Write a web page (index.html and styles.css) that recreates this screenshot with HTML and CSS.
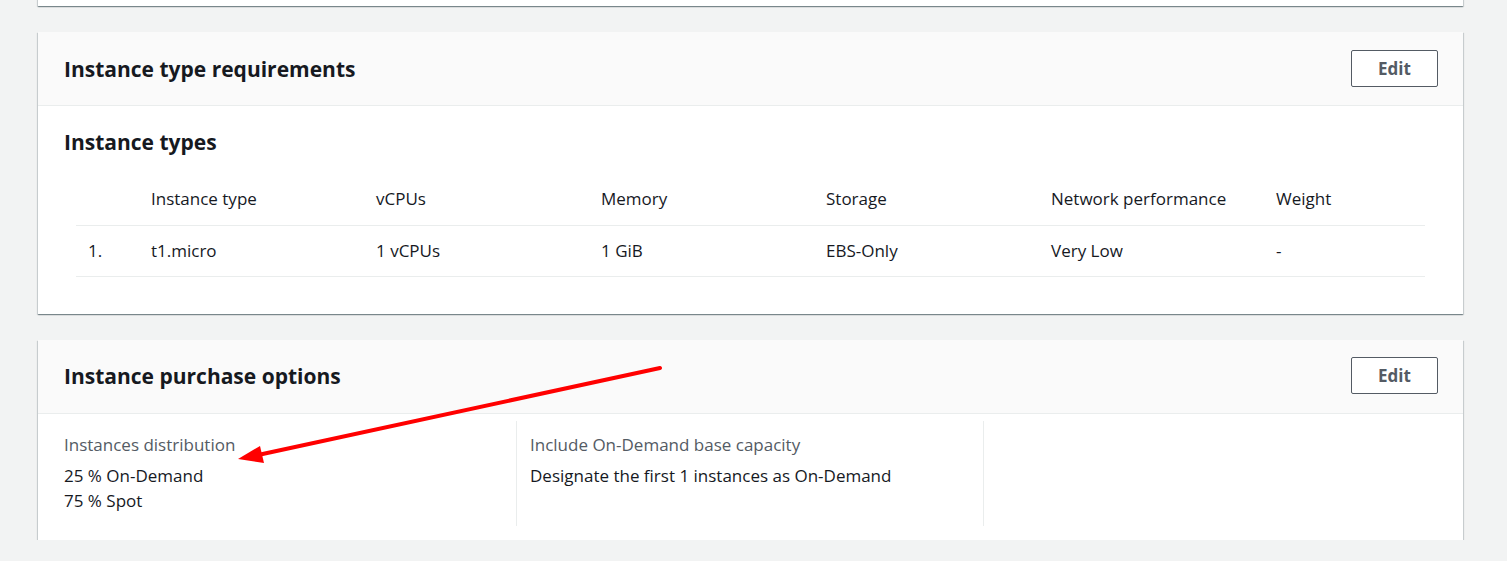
FILE: index.html
```html
<!DOCTYPE html>
<html>
<head>
<meta charset="utf-8">
<link rel="stylesheet" href="styles.css">
</head>
<body>
<div class="page">
  <div class="card card-top"></div>

  <section class="card">
    <header class="card-head">
      <h2>Instance type requirements</h2>
      <button class="btn">Edit</button>
    </header>
    <div class="card-body">
      <h3>Instance types</h3>
      <table class="types">
        <thead>
          <tr><th class="num"></th><th>Instance type</th><th>vCPUs</th><th>Memory</th><th>Storage</th><th class="net">Network performance</th><th class="net">Weight</th></tr>
        </thead>
        <tbody>
          <tr><td class="num">1.</td><td>t1.micro</td><td>1 vCPUs</td><td>1 GiB</td><td>EBS-Only</td><td class="net">Very Low</td><td class="net">-</td></tr>
        </tbody>
      </table>
    </div>
  </section>

  <section class="card">
    <header class="card-head">
      <h2>Instance purchase options</h2>
      <button class="btn">Edit</button>
    </header>
    <div class="cols">
      <div class="col">
        <div class="label">Instances distribution</div>
        <div class="value">25 % On-Demand</div>
        <div class="value">75 % Spot</div>
      </div>
      <div class="col">
        <div class="label">Include On-Demand base capacity</div>
        <div class="value">Designate the first 1 instances as On-Demand</div>
      </div>
      <div class="col"></div>
    </div>
    <svg class="arrow" width="440" height="110" viewBox="0 0 440 110">
      <line x1="424" y1="8" x2="22" y2="95" stroke="#f00" stroke-width="4" stroke-linecap="round"/>
      <polygon points="2,99 24,86 28,103" fill="#f00"/>
    </svg>
  </section>
</div>
</body>
</html>
```

FILE: styles.css
```css
* { box-sizing: border-box; }
html, body { margin: 0; padding: 0; }
body {
  background: #f2f3f3;
  font-family: "Open Sans", "Noto Sans", sans-serif;
  color: #16191f;
  font-size: 17px;
}
.page {
  width: 1425px;
  margin-left: 38px;
  display: flex;
  flex-direction: column;
  gap: 26px;
}
.card {
  background: #fff;
  position: relative;
  box-shadow: 0 1px 1px 0 rgba(0,28,36,.35), 1px 1px 1px 0 rgba(0,28,36,.12), -1px 1px 1px 0 rgba(0,28,36,.12);
}
.card-top {
  height: 7px;
  margin-top: -1px;
}
.card-head {
  background: #fafafa;
  border-bottom: 1px solid #eaeded;
  height: 74px;
  display: flex;
  align-items: center;
  justify-content: space-between;
  padding: 0 25px 0 26px;
}
h2 {
  margin: 0;
  font-size: 21px;
  font-weight: 700;
}
.btn {
  width: 87px;
  height: 37px;
  border: 1px solid #545b64;
  border-radius: 2px;
  background: #fff;
  color: #545b64;
  font-family: "Open Sans", sans-serif;
  font-weight: 700;
  font-size: 17px;
  padding: 0;
  margin-top: -1px;
}
.card-body {
  padding: 22px 38px 37px 26px;
}
h3 {
  margin: 0 0 21px;
  font-size: 21px;
  font-weight: 700;
  line-height: 28px;
}
.types {
  margin-left: 12px;
  width: 1349px;
  border-collapse: collapse;
  table-layout: fixed;
}
.types th, .types td {
  text-align: left;
  font-weight: 400;
  padding: 0;
  height: 51px;
  border-bottom: 1px solid #eaeded;
  font-size: 17px;
}
.types th { height: 48px; vertical-align: middle; padding-bottom: 4px; }
.types th.num, .types td.num { width: 75px; padding-left: 12px; }
.types th, .types td { width: 225px; }
.types th:last-child, .types td:last-child { width: 149px; }
.cols {
  display: grid;
  grid-template-columns: 478px 467px 1fr;
  padding: 7px 0 14px;
}
.col {
  padding: 12px 14px 0 26px;
  min-height: 105px;
  border-left: 1px solid #eaeded;
}
.col:first-child { border-left: none; }
.col + .col { padding-left: 13px; }
.label {
  color: #545b64;
  line-height: 24px;
  margin-bottom: 6px;
}
.value {
  line-height: 25px;
}
.arrow {
  position: absolute;
  left: 198px;
  top: 20px;
}
```
